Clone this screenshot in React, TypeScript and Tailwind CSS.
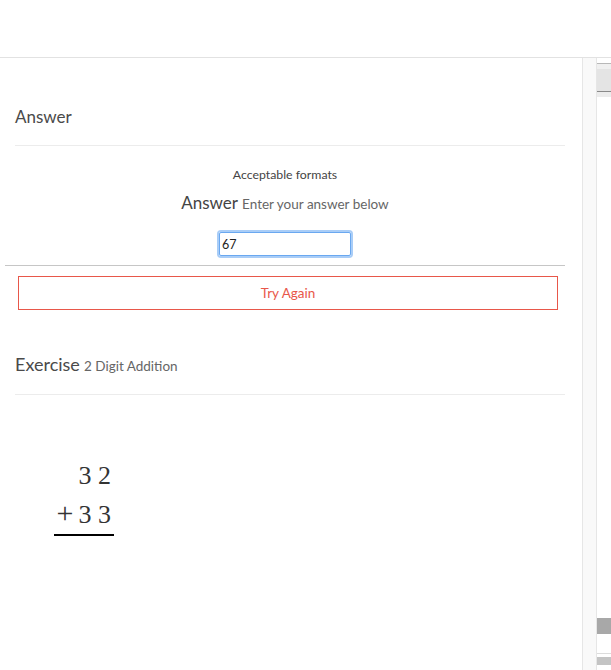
const font = { fontFamily: 'Lato, "Open Sans", Arial, sans-serif' };

function OuterScroll() {
  return (
    <div className="flex w-[14px] flex-col">
      <div className="h-[5px]" />
      <div className="h-px bg-[#b8b8b8]" />
      <div className="h-[5px] bg-[#f0f0f0]" />
      <div className="h-[22px] bg-[#e4e4e4]" />
      <div className="h-px bg-[#8a8a8a]" />
      <div className="h-[5px] bg-[#ececec]" />
      <div className="flex-1" />
      <div className="h-[16px] bg-[#a8a8a8]" />
      <div className="h-[19px]" />
      <div className="h-px bg-[#dcdcdc]" />
      <div className="h-[3px]" />
      <div className="h-[8px] bg-[#c4c4c4]" />
      <div className="h-[5px]" />
    </div>
  );
}

export default function App() {
  return (
    <div className="flex h-[670px] w-[611px] flex-col overflow-hidden bg-white" style={font}>
      <div className="h-[58px] shrink-0 border-b border-[#e2e2e2]" />
      <div className="flex flex-1">
        <main className="w-[582px] shrink-0">
          {/* Answer */}
          <section className="px-[15px] pt-[47px]">
            <h2 className="text-[17px] leading-6 text-[#4a4a4a]">Answer</h2>
            <div className="mt-[16px] mr-[2px] border-t border-[#ececec]" />
          </section>
          <div className="ml-[15px] w-[540px] text-center">
            <p className="mt-[21px] text-[12.3px] leading-4 text-[#444]">Acceptable formats</p>
            <p className="mt-[10px] leading-5">
              <span className="text-[17px] text-[#444]">Answer</span>{' '}
              <span className="text-[13.5px] text-[#666]">Enter your answer below</span>
            </p>
            <div className="mt-[18px] flex justify-center">
              <input
                defaultValue="67"
                className="h-[24px] w-[132px] rounded-[2px] border border-[#6aa8f0] px-[2px] text-[12.5px] text-[#222] shadow-[0_0_0_2px_#a9cdf7] outline-none"
                style={font}
              />
            </div>
          </div>
          <div className="mt-[9px] ml-[5px] w-[560px] border-t border-[#c6c6c6]" />
          <div className="mt-[10px] ml-[18px] w-[540px]">
            <button
              className="flex h-[34px] w-full items-center justify-center border border-[#e8574a] text-[13.5px] text-[#e8574a]"
              style={font}
            >
              Try Again
            </button>
          </div>

          {/* Exercise */}
          <section className="px-[15px] pt-[42px]">
            <h2 className="leading-6 text-[#4a4a4a]">
              <span className="text-[18px]">Exercise</span>{' '}
              <span className="text-[13.5px] text-[#666]">2 Digit Addition</span>
            </h2>
            <div className="mt-[16px] mr-[2px] border-t border-[#ececec]" />
          </section>

          <div
            className="mt-[61px] ml-[54px] w-[60px] border-b-2 border-black pr-[3px] text-right text-[26px] leading-[39px] text-[#333]"
            style={{ fontFamily: '"Liberation Serif", "Times New Roman", serif' }}
          >
            <div>3 2</div>
            <div>
              <span className="mr-[5px] text-[30px] leading-none">+</span>3 3
            </div>
          </div>
        </main>
        <div className="w-[15px] shrink-0 border-x border-[#e6e6e6] bg-[#f9f9f9]" />
        <OuterScroll />
      </div>
    </div>
  );
}
